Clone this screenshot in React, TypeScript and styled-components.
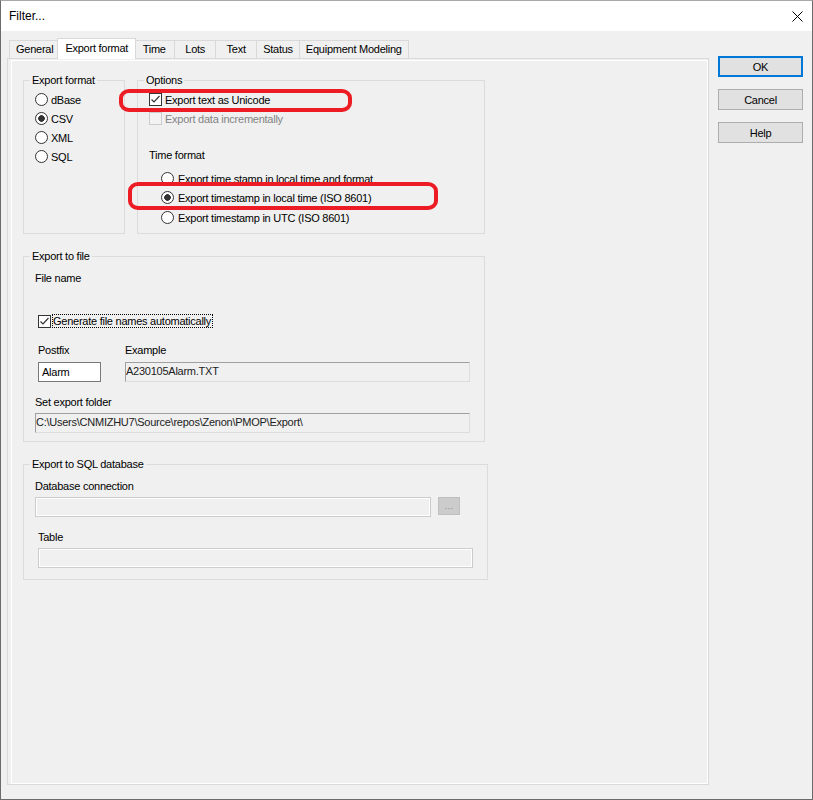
import React from 'react';
import styled, { createGlobalStyle, css } from 'styled-components';

const GlobalStyle = createGlobalStyle`
  html, body {
    margin: 0;
    padding: 0;
    background: #f0f0f0;
  }
  body {
    font-family: "Liberation Sans", Arial, sans-serif;
    font-size: 11px;
    color: #000;
  }
`;

// Window frame
const Window = styled.div`
  width: 813px;
  height: 800px;
  box-sizing: border-box;
  border: 1px solid #6b6b6b;
  border-top-color: #a8a8a8;
  display: flex;
  flex-direction: column;
  background: #f0f0f0;
`;

const TitleBar = styled.div`
  height: 30px;
  background: #fff;
  display: flex;
  align-items: center;
  justify-content: space-between;
  padding: 0 9px 0 8px;
  flex-shrink: 0;
`;

const TitleText = styled.span`
  font-size: 12px;
  color: #000;
`;

const CloseButton = styled.span`
  width: 11px;
  height: 11px;
  display: flex;
`;

const Body = styled.div`
  flex: 1;
  display: flex;
  padding: 7px 0 0 6px;
  gap: 9px;
  letter-spacing: -0.25px;
`;

// Tab control
const TabControl = styled.div`
  width: 702px;
  display: flex;
  flex-direction: column;
`;

const TabStrip = styled.div`
  display: flex;
  align-items: flex-end;
  height: 20px;
  padding-left: 3px;
`;

const Tab = styled.div<{ $active?: boolean }>`
  box-sizing: border-box;
  height: 18px;
  min-width: 42px;
  padding: 0 6px 1px;
  margin-left: -1px;
  border: 1px solid #d9d9d9;
  border-bottom: none;
  background: #f0f0f0;
  display: flex;
  align-items: center;
  justify-content: center;
  white-space: nowrap;
  ${p =>
    p.$active &&
    css`
      height: 21px;
      margin: 0 -2px -1px -3px;
      padding: 0 7px 3px;
      background: #fff;
      position: relative;
      z-index: 1;
    `}
`;

const TabPanel = styled.div`
  box-sizing: border-box;
  height: 727px;
  border: 1px solid #d9d9d9;
  background: #f0f0f0;
  display: flex;
`;

const Page = styled.div`
  flex: 1;
  margin: 1px 0 0 3px;
  border: 1px solid #fff;
  padding: 13px 0 0 11px;
  position: relative;
`;

// Group boxes
const GroupBox = styled.fieldset<{ $width: number; $height: number; $top?: number }>`
  box-sizing: border-box;
  width: ${p => p.$width}px;
  height: ${p => p.$height}px;
  margin: ${p => p.$top || 0}px 0 0 0;
  padding: 0;
  min-inline-size: 0;
  border: 1px solid #dcdcdc;
`;

const Legend = styled.legend`
  margin-left: 6px;
  padding: 0 2px;
  line-height: 13px;
`;

const GroupBody = styled.div<{ $top: number }>`
  padding: ${p => p.$top}px 0 0 11px;
  display: flex;
  flex-direction: column;
  align-items: flex-start;
`;

const TopRow = styled.div`
  display: flex;
  gap: 12px;
`;

// Options
const OptionRow = styled.div<{ $height?: number; $indent?: number; $gap?: number; $top?: number }>`
  display: flex;
  align-items: center;
  height: ${p => p.$height || 19}px;
  margin-top: ${p => p.$top || 0}px;
  margin-left: ${p => p.$indent || 0}px;
  gap: ${p => p.$gap || 3}px;
  white-space: nowrap;
`;

const RadioMark = styled.span<{ $checked?: boolean }>`
  box-sizing: border-box;
  width: 13px;
  height: 13px;
  border-radius: 50%;
  border: 1px solid #333;
  background: ${p =>
    p.$checked ? 'radial-gradient(circle, #333 0 3px, #fff 3.6px)' : '#fff'};
  flex-shrink: 0;
`;

const CheckMark = styled.span<{ $disabled?: boolean }>`
  box-sizing: border-box;
  width: 13px;
  height: 13px;
  border: 1px solid ${p => (p.$disabled ? '#cccccc' : '#333')};
  background: ${p => (p.$disabled ? '#f3f3f3' : '#fff')};
  display: flex;
  flex-shrink: 0;
`;

const OptionLabel = styled.span<{ $disabled?: boolean; $focused?: boolean }>`
  color: ${p => (p.$disabled ? '#838383' : '#000')};
  ${p =>
    p.$focused &&
    css`
      border: 1px dotted #000;
      padding: 0 1px 0 0;
      line-height: 12px;
      margin-left: -2px;
    `}
`;

const FieldLabel = styled.div<{ $top?: number; $indent?: number }>`
  line-height: 13px;
  margin-top: ${p => p.$top || 0}px;
  margin-left: ${p => p.$indent || 0}px;
  white-space: nowrap;
`;

const FieldsRow = styled.div<{ $top?: number; $gap: number }>`
  display: flex;
  align-items: flex-start;
  gap: ${p => p.$gap}px;
  margin-top: ${p => p.$top || 0}px;
`;

const FieldColumn = styled.div<{ $indent?: number }>`
  display: flex;
  flex-direction: column;
  gap: 5px;
  margin-left: ${p => p.$indent || 0}px;
`;

const TextInput = styled.div<{ $width: number }>`
  box-sizing: border-box;
  width: ${p => p.$width}px;
  height: 20px;
  border: 1px solid #7a7a7a;
  background: #fff;
  padding: 0 3px;
  line-height: 18px;
`;

const ReadonlyField = styled.div<{ $width: number; $top?: number }>`
  box-sizing: border-box;
  width: ${p => p.$width}px;
  height: 20px;
  margin-top: ${p => p.$top || 0}px;
  border: 1px solid;
  border-color: #a0a0a0 #dedede #dedede #a0a0a0;
  background: #f0f0f0;
  color: #222;
  line-height: 16px;
  white-space: nowrap;
`;

const DisabledField = styled.div<{ $width: number; $top?: number; $indent?: number }>`
  box-sizing: border-box;
  width: ${p => p.$width}px;
  height: 20px;
  margin-top: ${p => p.$top || 0}px;
  margin-left: ${p => p.$indent || 0}px;
  border: 1px solid #cccccc;
  box-shadow: inset 0 0 0 1px #fff;
  background: #f0f0f0;
`;

const BrowseButton = styled.div`
  box-sizing: border-box;
  width: 22px;
  height: 18px;
  background: #cccccc;
  border: 1px solid #bfbfbf;
  color: #838383;
  font-size: 9px;
  letter-spacing: 0.5px;
  display: flex;
  align-items: center;
  justify-content: center;
  padding-bottom: 1px;
`;

// Right-hand buttons
const ButtonColumn = styled.div`
  display: flex;
  flex-direction: column;
  gap: 12px;
  padding-top: 18px;
`;

const DialogButton = styled.div<{ $default?: boolean }>`
  box-sizing: border-box;
  width: 85px;
  height: 21px;
  background: #e1e1e1;
  border: ${p => (p.$default ? '2px solid #0078d7' : '1px solid #adadad')};
  display: flex;
  align-items: center;
  justify-content: center;
`;

// Red markup drawn over the screenshot
const Annotation = styled.div<{ $left: number; $top: number; $width: number; $height: number }>`
  position: absolute;
  left: ${p => p.$left}px;
  top: ${p => p.$top}px;
  width: ${p => p.$width}px;
  height: ${p => p.$height}px;
  box-sizing: border-box;
  border: 4px solid #ed1c24;
  border-radius: 10px / 9px;
  pointer-events: none;
`;

const Check = () => (
  <svg width="11" height="11" viewBox="0 0 11 11">
    <path d="M1.5 5.5 L4 8 L9.5 2" fill="none" stroke="#333" strokeWidth="1.2" />
  </svg>
);

const tabs = ['General', 'Export format', 'Time', 'Lots', 'Text', 'Status', 'Equipment Modeling'];

export default function App() {
  return (
    <>
      <GlobalStyle />
      <Window>
        <TitleBar>
          <TitleText>Filter...</TitleText>
          <CloseButton>
            <svg width="11" height="11" viewBox="0 0 11 11">
              <path d="M0.5 0.5 L10.5 10.5 M10.5 0.5 L0.5 10.5" stroke="#000" strokeWidth="1" />
            </svg>
          </CloseButton>
        </TitleBar>
        <Body>
          <TabControl>
            <TabStrip>
              {tabs.map(t => (
                <Tab key={t} $active={t === 'Export format'}>
                  {t}
                </Tab>
              ))}
            </TabStrip>
            <TabPanel>
              <Page>
                <TopRow>
                  <GroupBox $width={102} $height={160}>
                    <Legend>Export format</Legend>
                    <GroupBody $top={3}>
                      <OptionRow>
                        <RadioMark />
                        <span>dBase</span>
                      </OptionRow>
                      <OptionRow>
                        <RadioMark $checked />
                        <span>CSV</span>
                      </OptionRow>
                      <OptionRow>
                        <RadioMark />
                        <span>XML</span>
                      </OptionRow>
                      <OptionRow>
                        <RadioMark />
                        <span>SQL</span>
                      </OptionRow>
                    </GroupBody>
                  </GroupBox>
                  <GroupBox $width={348} $height={160}>
                    <Legend>Options</Legend>
                    <GroupBody $top={3}>
                      <OptionRow>
                        <CheckMark>
                          <Check />
                        </CheckMark>
                        <span>Export text as Unicode</span>
                      </OptionRow>
                      <OptionRow>
                        <CheckMark $disabled />
                        <OptionLabel $disabled>Export data incrementally</OptionLabel>
                      </OptionRow>
                      <FieldLabel $top={21}>Time format</FieldLabel>
                      <OptionRow $indent={12} $gap={4} $top={7}>
                        <RadioMark />
                        <span>Export time stamp in local time and format</span>
                      </OptionRow>
                      <OptionRow $indent={12} $gap={4} $height={19.5}>
                        <RadioMark $checked />
                        <span>Export timestamp in local time (ISO 8601)</span>
                      </OptionRow>
                      <OptionRow $indent={12} $gap={4} $height={20}>
                        <RadioMark />
                        <span>Export timestamp in UTC (ISO 8601)</span>
                      </OptionRow>
                    </GroupBody>
                  </GroupBox>
                </TopRow>

                <GroupBox $width={462} $height={192} $top={16}>
                  <Legend>Export to file</Legend>
                  <GroupBody $top={9}>
                    <FieldLabel>File name</FieldLabel>
                    <OptionRow $height={14} $indent={3} $top={29}>
                      <CheckMark>
                        <Check />
                      </CheckMark>
                      <OptionLabel $focused>Generate file names automatically</OptionLabel>
                    </OptionRow>
                    <FieldsRow $top={16} $gap={24}>
                      <FieldColumn $indent={3}>
                        <FieldLabel>Postfix</FieldLabel>
                        <TextInput $width={63}>Alarm</TextInput>
                      </FieldColumn>
                      <FieldColumn>
                        <FieldLabel>Example</FieldLabel>
                        <ReadonlyField $width={345}>A230105Alarm.TXT</ReadonlyField>
                      </FieldColumn>
                    </FieldsRow>
                    <FieldLabel $top={14}>Set export folder</FieldLabel>
                    <ReadonlyField $width={435} $top={4}>
                      C:\Users\CNMIZHU7\Source\repos\Zenon\PMOP\Export\
                    </ReadonlyField>
                  </GroupBody>
                </GroupBox>

                <GroupBox $width={465} $height={122} $top={16}>
                  <Legend>Export to SQL database</Legend>
                  <GroupBody $top={9}>
                    <FieldLabel>Database connection</FieldLabel>
                    <FieldsRow $top={4} $gap={7}>
                      <DisabledField $width={396} />
                      <BrowseButton>...</BrowseButton>
                    </FieldsRow>
                    <FieldLabel $top={14} $indent={3}>
                      Table
                    </FieldLabel>
                    <DisabledField $width={435} $top={4} $indent={3} />
                  </GroupBody>
                </GroupBox>

                <Annotation $left={107} $top={28} $width={233} $height={23} />
                <Annotation $left={116} $top={121} $width={310} $height={28} />
              </Page>
            </TabPanel>
          </TabControl>
          <ButtonColumn>
            <DialogButton $default>OK</DialogButton>
            <DialogButton>Cancel</DialogButton>
            <DialogButton>Help</DialogButton>
          </ButtonColumn>
        </Body>
      </Window>
    </>
  );
}
